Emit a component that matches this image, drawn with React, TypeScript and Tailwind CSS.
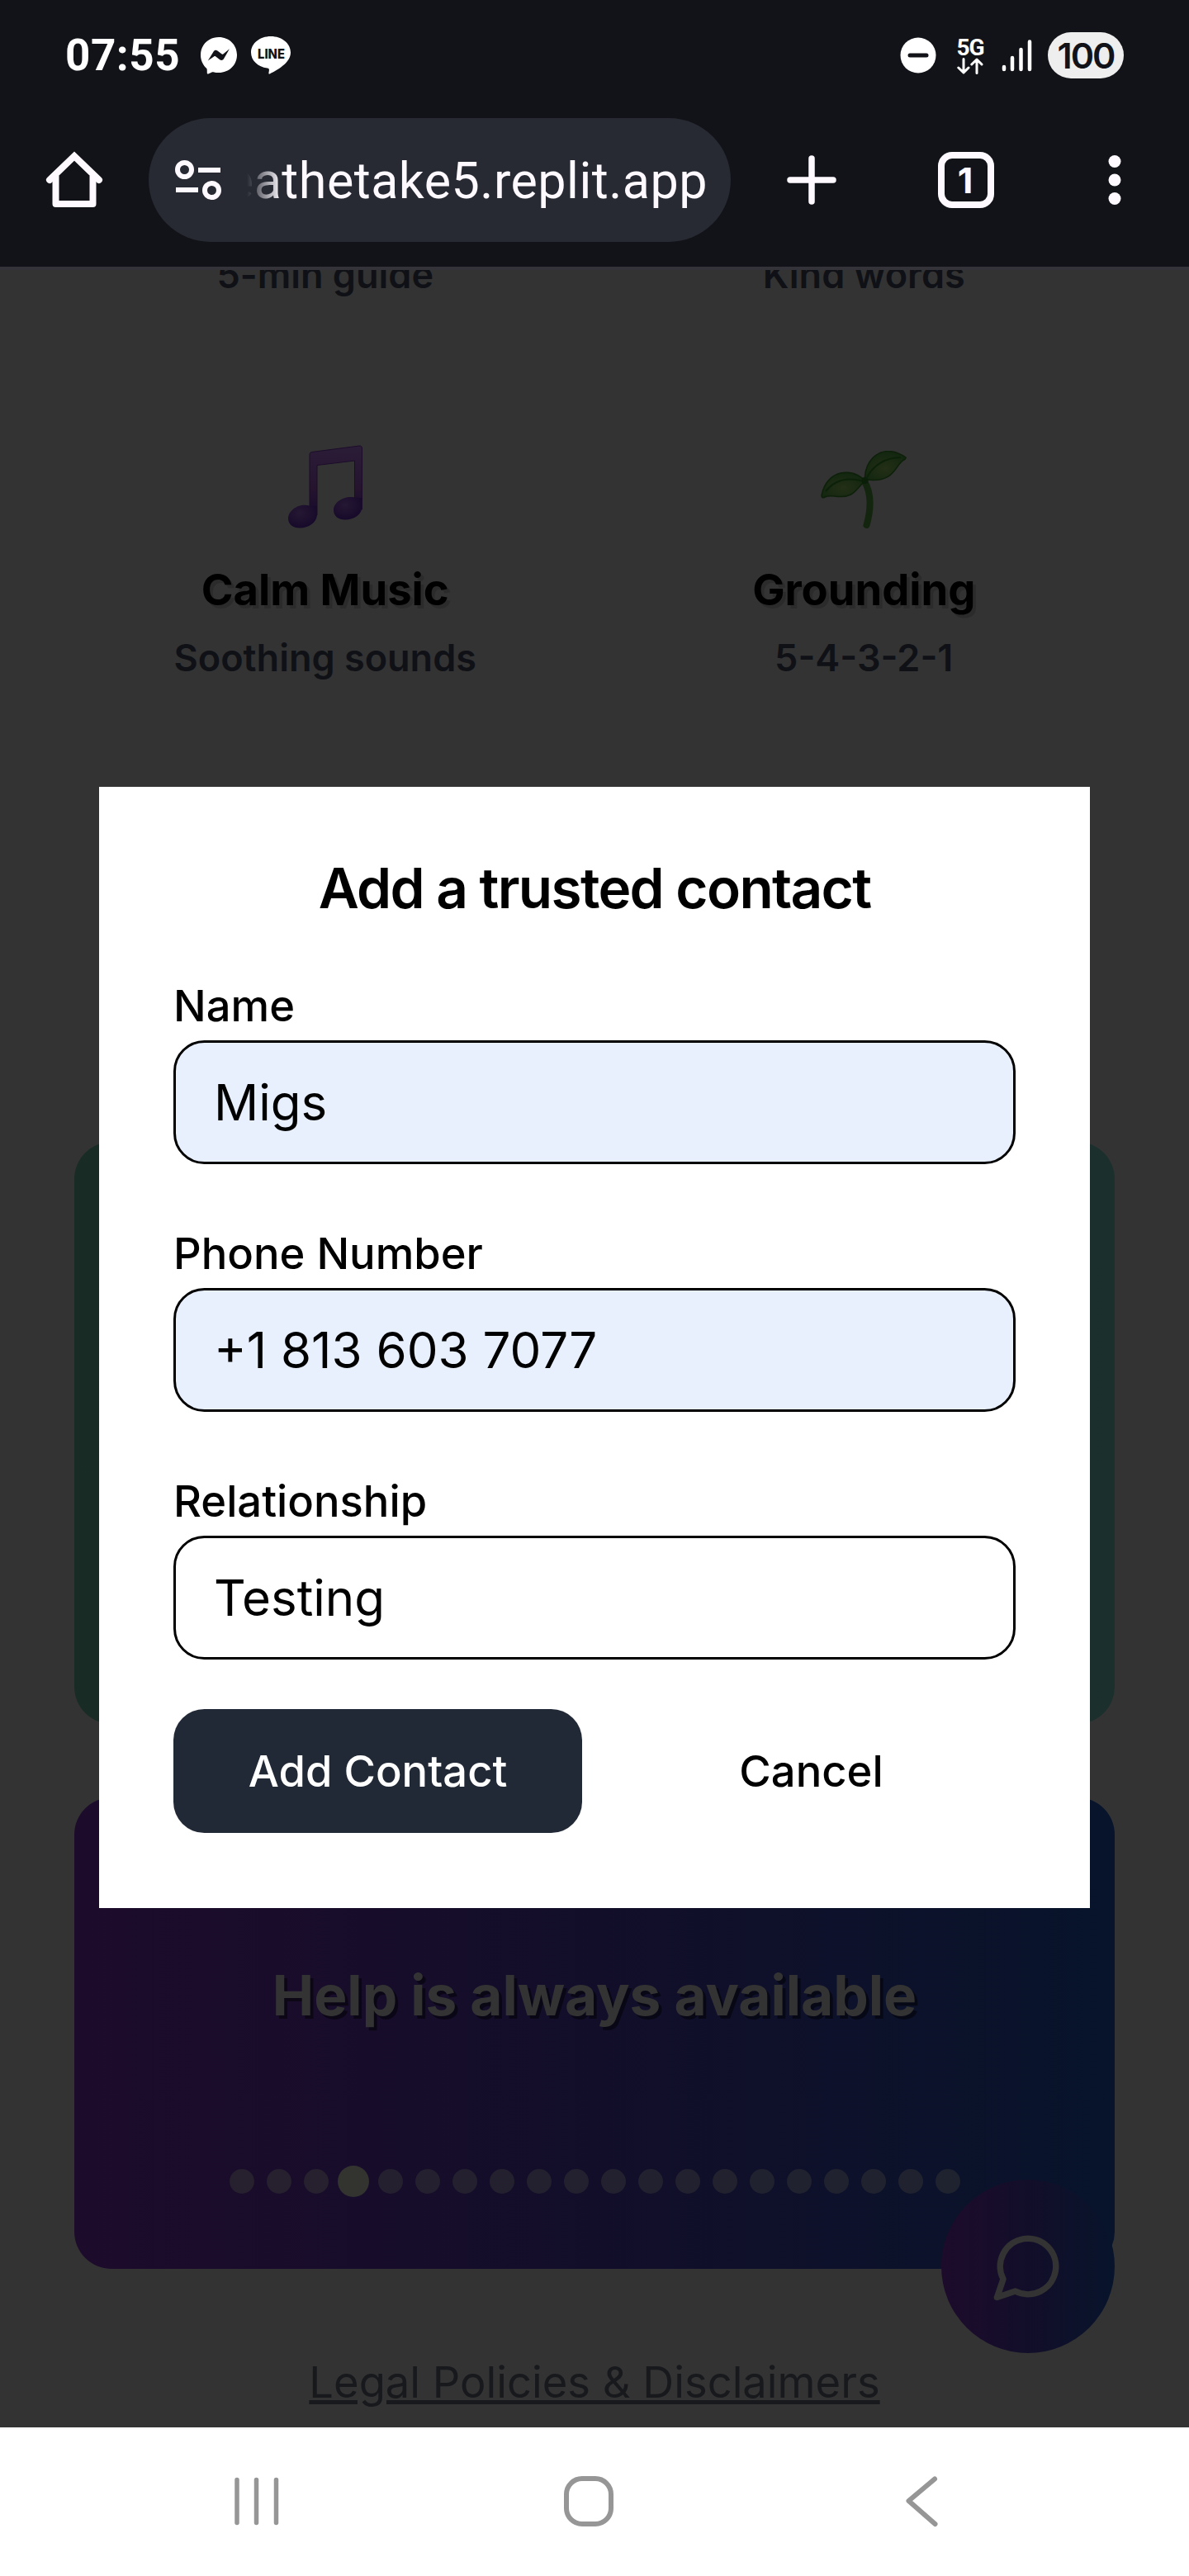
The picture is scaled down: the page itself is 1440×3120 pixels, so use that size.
import React from "react";

const inter = "font-['Inter',sans-serif]";

function MessengerIcon() {
  return (
    <svg className="h-[46px] w-[46px]" viewBox="0 0 46 46">
      <path d="M23 1C10.500 1 1 10.300 1 22.600c0 6.600 2.700 12.300 7.100 16.200.4.4.6.900.6 1.400l.1 4.300c0 .8.700 1.200 1.400 1l4.800-2.200c.4-.2.900-.2 1.300-.1 2.100.6 4.400.9 6.700.9 12.500 0 22-9.200 22-21.500S35.500 1 23 1Z" fill="#fff" />
      <path d="m9.800 29.500 6.800-11.100c1-1.700 3.200-2.100 4.800-.9l5.300 4c.5.400 1.100.4 1.600 0l7.600-6.300-6.900 12.100c-1 1.700-3.200 2.100-4.800.9l-5.200-4c-.5-.4-1.100-.4-1.600 0Z" fill="#121318" />
    </svg>
  );
}

function LineIcon() {
  return (
    <svg className="h-[48px] w-[50px]" viewBox="0 0 50 48">
      <path d="M25 1C11.500 1 1 9.600 1 20.500c0 9.800 8.300 17.500 19.700 19 1.700.3 2.500 1 2.200 2.800l-.5 3.200c-.1.900.5 1.400 1.400.9C31.500 42.500 49 33.500 49 20.500 49 9.600 38.500 1 25 1Z" fill="#fff" />
      <text x="25.500" y="27.500" textAnchor="middle" textLength="33" lengthAdjust="spacingAndGlyphs" fontFamily="Inter, sans-serif" fontWeight="800" fontSize="15.500" fill="#121318">LINE</text>
    </svg>
  );
}

function StatusBar() {
  return (
    <div className="flex h-[134px] items-center pl-[79px] pr-[79px] text-white">
      <span className="w-[163px] font-['Roboto',sans-serif] text-[53px] leading-none font-bold tracking-[0.500px]">07:55</span>
      <MessengerIcon />
      <div className="w-[15px]" />
      <LineIcon />
      <div className="flex-1" />
      <svg className="h-[44px] w-[44px]" viewBox="0 0 44 44">
        <circle cx="22" cy="22" r="21.500" fill="#fff" />
        <rect x="9.500" y="19.500" width="25" height="5" rx="2.500" fill="#121318" />
      </svg>
      <div className="ml-[24px] flex w-[34px] flex-col items-center">
        <span className="font-['Roboto',sans-serif] text-[28px] leading-[25px] font-bold tracking-[-1px]">5G</span>
        <svg className="h-[20px] w-[32px]" viewBox="0 0 32 20" fill="none" stroke="#fff" strokeWidth="3" strokeLinecap="round" strokeLinejoin="round">
          <path d="M8 1.500v16M1.800 12 8 18l6-6M24 18.500v-16M17.800 8 24 2l6 6" />
        </svg>
      </div>
      <svg className="ml-[21px] h-[40px] w-[38px]" viewBox="0 0 38 40" stroke="#fff" strokeWidth="4.500" strokeLinecap="round">
        <path d="M3 34v3M13 23v14M23.500 13v24M34 3.500v33.500" />
      </svg>
      <div className="ml-[18px] flex h-[56px] w-[92px] items-center justify-center rounded-full bg-[#eee] font-['Inter',sans-serif] text-[43px] font-semibold tracking-[-2px] text-[#121318]">100</div>
    </div>
  );
}

function BrowserBar() {
  return (
    <div className="flex h-[189px] pt-[9px]">
      <svg className="mt-[39px] ml-[54px] h-[72px] w-[72px]" viewBox="0 0 72 72" fill="none" stroke="#fdf9ff" strokeWidth="8" strokeLinejoin="round" strokeLinecap="round">
        <path d="M6 36 36 7l30 29" strokeLinejoin="miter" />
        <path d="M13.500 31v34h45V31" strokeLinecap="butt" />
      </svg>
      <div className="ml-[54px] flex h-[150px] w-[705px] items-center rounded-full bg-[#272a33]">
        <svg className="ml-[30px] h-[60px] w-[60px]" viewBox="0 0 60 60" fill="none" stroke="#fdf9ff" strokeWidth="6">
          <circle cx="13.500" cy="17.500" r="8.500" />
          <path d="M30 18h27M3 42h27" />
          <circle cx="46.500" cy="42.500" r="8.500" />
        </svg>
        <div className="ml-[29px] flex h-[90px] w-[558px] items-center justify-end overflow-hidden pt-[4px] [mask-image:linear-gradient(to_right,transparent,black_42px)]">
          <span className="font-['Roboto',sans-serif] text-[61px] tracking-[0.500px] whitespace-nowrap text-[#fdf9ff]">eathetake5.replit.app</span>
        </div>
      </div>
      <svg className="mt-[45px] ml-[68px] h-[60px] w-[60px]" viewBox="0 0 60 60" stroke="#fdf9ff" strokeWidth="7.500" strokeLinecap="round">
        <path d="M30 4v52M4 30h52" />
      </svg>
      <div className="mt-[41px] ml-[123px] flex h-[68px] w-[68px] items-center justify-center rounded-[17px] border-[8px] border-[#fdf9ff] pr-[2px] font-['Inter',sans-serif] text-[43px] leading-none font-bold text-[#fdf9ff]">1</div>
      <svg className="mt-[45px] ml-[138px] h-[60px] w-[16px]" viewBox="0 0 16 60" fill="#fdf9ff">
        <circle cx="8" cy="7.500" r="7.500" />
        <circle cx="8" cy="30" r="7.500" />
        <circle cx="8" cy="52.500" r="7.500" />
      </svg>
    </div>
  );
}

function MusicIcon() {
  return (
    <svg className="h-[101px] w-[92px]" viewBox="0 0 92 101">
      <defs>
        <linearGradient id="note" x1="0" y1="0" x2="0" y2="1">
          <stop offset="0" stopColor="#2b1c38" />
          <stop offset="0.600" stopColor="#26142f" />
          <stop offset="1" stopColor="#160a2b" />
        </linearGradient>
        <radialGradient id="head" cx="0.400" cy="0.350" r="0.700">
          <stop offset="0" stopColor="#251833" />
          <stop offset="1" stopColor="#160829" />
        </radialGradient>
      </defs>
      <path d="M27 11.500c0-1.700 1-2.700 2.700-3L87 1c2.200-.3 3.500.8 3.500 3v74h-9V19L36 24.500V85h-9Z" fill="url(#note)" stroke="#1c0c2a" strokeWidth="1" />
      <path d="M27 73.500C14 70 1 79 1 89c0 7 6 11.500 14 11.500 11 0 20.500-6.500 21-16V74Z" fill="url(#head)" />
      <path d="M81.500 63.500C69 61 56 69 56 79c0 7 6 11.500 14 11.500 11 0 20.500-6.500 20.500-16V64Z" fill="url(#head)" />
    </svg>
  );
}

function SeedlingIcon() {
  return (
    <svg className="h-[94px] w-[106px]" viewBox="0 0 106 94">
      <defs>
        <radialGradient id="leaf" cx="0.500" cy="0.600" r="0.600">
          <stop offset="0" stopColor="#242f17" />
          <stop offset="1" stopColor="#12260f" />
        </radialGradient>
      </defs>
      <path d="M54 37c7 12 9 30 2.500 53" fill="none" stroke="#14250f" strokeWidth="8" strokeLinecap="round" />
      <path d="M54 36C40 20 8 22 2 54c0 3 1.500 3.500 4 2 3-1.500 7-1.500 12-1 26 4 27-13 36-17Z" fill="url(#leaf)" stroke="#0d2009" strokeWidth="1.500" />
      <path d="M54.500 35C53 12 75-12 104 8c.5 1.500-1 2.500-3 3.500C91 17 91 39 57 35Z" fill="url(#leaf)" stroke="#0d2009" strokeWidth="1.500" />
      <path d="M7 49c14-17 30-16 46-12M57 32C65 17 80 8 98 8" fill="none" stroke="#0c2109" strokeWidth="2" />
      <circle cx="54.500" cy="36" r="4" fill="#0b1e08" />
    </svg>
  );
}

function Feature({ above, icon, title, sub }: { above: string; icon: React.ReactNode; title: string; sub: string }) {
  return (
    <div className="flex flex-col items-center text-center">
      <div className="h-[60px] text-[45px] leading-[60px] font-semibold text-[#0f1116]">{above}</div>
      <div className="flex h-[314px] items-end justify-center pb-[37px]">{icon}</div>
      <div className="h-[90px] text-[52.500px] leading-[75px] font-bold text-black [text-shadow:3.750px_3.750px_0_rgba(0,0,0,0.150)]">{title}</div>
      <div className="h-[60px] text-[45px] leading-[60px] font-semibold text-[#0f1116]">{sub}</div>
    </div>
  );
}

const dots = Array.from({ length: 20 }, (_, i) => i);

function Page() {
  return (
    <div className={`${inter} h-full overflow-hidden px-[90px]`}>
      <div className="-mt-[24px] grid grid-cols-2 gap-[45px]">
        <Feature above="5-min guide" icon={<MusicIcon />} title="Calm Music" sub="Soothing sounds" />
        <Feature above="Kind words" icon={<SeedlingIcon />} title="Grounding" sub="5-4-3-2-1" />
      </div>
      <div className="mt-[556px] h-[705px] rounded-[45px] bg-gradient-to-r from-[#182b24] to-[#1b2f2d]" />
      <div className="mt-[89px] flex h-[571px] flex-col items-center rounded-[45px] bg-gradient-to-r from-[#1d0b2b] via-[#120e2a] to-[#07142b]">
        <h2 className="mt-[195px] text-[67.500px] leading-[90px] font-bold text-[#333] [text-shadow:3.750px_3.750px_0_rgba(0,0,0,0.500)]">Help is always available</h2>
        <div className="mt-[161px] flex h-[38px] items-center gap-[15px]">
          {dots.map((i) =>
            i === 3 ? (
              <span key={i} className="-mx-[4px] h-[38px] w-[38px] rounded-full bg-[#333330]" />
            ) : (
              <span key={i} className="h-[30px] w-[30px] rounded-full bg-[#333]/50" />
            )
          )}
        </div>
      </div>
      <p className="mt-[100px] text-center text-[52.500px] leading-[75px] text-[#17191d] underline">Legal Policies &amp; Disclaimers</p>
    </div>
  );
}

function Field({ label, value, filled }: { label: string; value: string; filled?: boolean }) {
  return (
    <label className="block h-[300px]">
      <span className="block h-[79px] text-[52.500px] leading-[75px] font-medium">{label}</span>
      <span className={`flex h-[150px] items-center rounded-[37.500px] border-[3px] border-black pl-[46px] text-[60px] ${filled ? "bg-[#e8effd]" : "bg-white"}`}>{value}</span>
    </label>
  );
}

function ContactDialog() {
  return (
    <div className={`${inter} h-[1358px] w-[1200px] bg-white px-[90px] text-black`}>
      <h1 className="pt-[89px] text-center text-[67.500px] leading-[68px] font-semibold tracking-[-0.025em]">Add a trusted contact</h1>
      <div className="mt-[71px]">
        <Field label="Name" value="Migs" filled />
        <Field label="Phone Number" value="+1 813 603 7077" filled />
        <Field label="Relationship" value="Testing" />
      </div>
      <div className="-mt-[11px] grid grid-cols-2 gap-[30px] text-[52.500px] font-medium">
        <button className="h-[150px] rounded-[37.500px] bg-[#222936] text-white">Add Contact</button>
        <button className="h-[150px]">Cancel</button>
      </div>
    </div>
  );
}

export default function App() {
  return (
    <div className="flex h-[3120px] w-[1440px] flex-col overflow-hidden">
      <header className="h-[323px] bg-[#121318]">
        <StatusBar />
        <BrowserBar />
      </header>
      <main className="relative h-[2617px] border-t-[4px] border-[#333339] bg-[#333]">
        <Page />
        <div className="absolute right-[90px] bottom-[90px] flex h-[210px] w-[210px] items-center justify-center rounded-full bg-gradient-to-r from-[#1d0b2b] via-[#120e2a] to-[#07142b]">
          <svg className="h-[90px] w-[90px]" viewBox="0 0 24 24" fill="none" stroke="#333" strokeWidth="2" strokeLinecap="round" strokeLinejoin="round">
            <path d="M7.900 20A9 9 0 1 0 4 16.100L2 22Z" />
          </svg>
        </div>
        <div className="absolute inset-x-0 top-[626px] flex justify-center">
          <ContactDialog />
        </div>
      </main>
      <nav className="flex h-[180px] items-start bg-white pt-[57px]">
        <svg className="ml-[282px] h-[64px] w-[58px]" viewBox="0 0 58 64" fill="none" stroke="#969696" strokeWidth="5.500" strokeLinecap="round">
          <path d="M5 6.500v52M28.500 6.500v52M52.500 6.500v52" />
        </svg>
        <svg className="ml-[341px] h-[66px] w-[64px]" viewBox="0 0 64 66" fill="none" stroke="#969696" strokeWidth="6">
          <rect x="5" y="5" width="54" height="55" rx="19" />
        </svg>
        <svg className="ml-[349px] h-[66px] w-[44px]" viewBox="0 0 44 66" fill="none" stroke="#969696" strokeWidth="6" strokeLinecap="round" strokeLinejoin="round">
          <path d="M38 5.500 6.500 32 38.500 60" />
        </svg>
      </nav>
    </div>
  );
}
